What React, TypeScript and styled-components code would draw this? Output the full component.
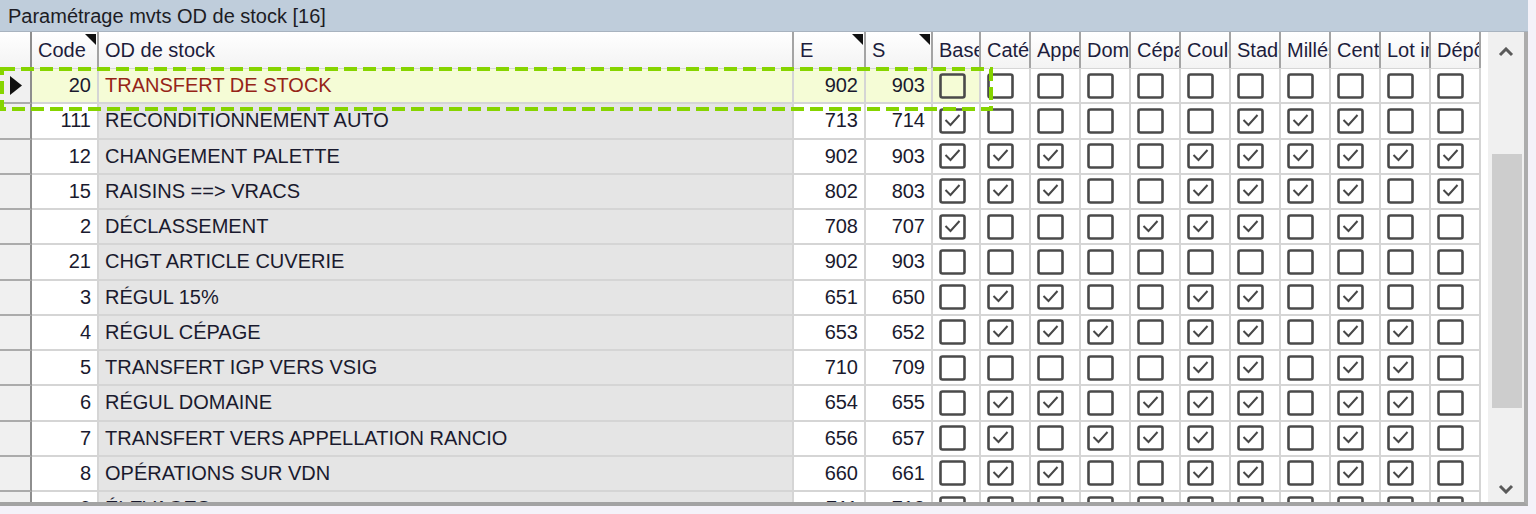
import React from 'react';
import styled, { createGlobalStyle, css } from 'styled-components';

const COLS = '32px 67px 695px 72px 67px 48px repeat(10, 50px)';

const GlobalStyle = createGlobalStyle`
  html, body {
    margin: 0;
    padding: 0;
    background: #f4f2f9;
    font-family: "Liberation Sans", Arial, sans-serif;
  }
`;

const Panel = styled.div`
  position: relative;
  width: 1528px;
`;

const TitleBar = styled.div`
  height: 30px;
  padding: 1px 0 0 8px;
  display: flex;
  align-items: center;
  background: #bfcddb;
  border-bottom: 1px solid #a8b3bf;
  font-size: 20px;
  color: #1c1c24;
`;

const GridFrame = styled.div`
  display: flex;
  height: 470px;
  background: #fff;
  border-bottom: 4px solid #a3a3a3;
  border-right: 4px solid #acacac;
`;

const GridArea = styled.div`
  flex: 1;
  display: flex;
  flex-direction: column;
  overflow: hidden;
`;

const HeaderRow = styled.div`
  display: grid;
  grid-template-columns: ${COLS};
  height: 37px;
  flex-shrink: 0;
  background: linear-gradient(#ffffff, #f3f3f3);
  border-bottom: 1px solid #d6d6d6;
  box-sizing: border-box;
`;

const HeaderCell = styled.div<{ $sort?: boolean }>`
  position: relative;
  display: flex;
  align-items: center;
  padding-left: 6px;
  overflow: hidden;
  white-space: nowrap;
  font-size: 20px;
  color: #1d1d3c;
  border-right: 2px solid #a4a4a4;
  ${({ $sort }) =>
    $sort &&
    css`
      &::after {
        content: '';
        position: absolute;
        top: 2px;
        right: 1px;
        border-top: 11px solid #111;
        border-left: 11px solid transparent;
      }
    `}
`;

const CornerCell = styled.div`
  border-right: 2px solid #8e8e8e;
`;

const Body = styled.div`
  flex: 1;
  overflow: hidden;
`;

const Row = styled.div`
  display: grid;
  grid-template-columns: ${COLS};
  height: 35.25px;
`;

const Cell = styled.div<{ $selected?: boolean }>`
  box-sizing: border-box;
  display: flex;
  align-items: center;
  font-size: 20px;
  white-space: nowrap;
  overflow: hidden;
  color: #1a1a2e;
  border-right: 2px solid #d5d5d5;
  border-bottom: 2px solid #d5d5d5;
  background: ${({ $selected }) => ($selected ? '#f5fcd6' : '#ffffff')};
`;

const IndicatorCell = styled(Cell)`
  justify-content: center;
  background: #f0f0f0;
  border-right-color: #8e8e8e;
  border-bottom-color: #ababab;
`;

const NumCell = styled(Cell)`
  justify-content: flex-end;
  padding-right: 6px;
`;

const LabelCell = styled(Cell)`
  padding-left: 6px;
  background: ${({ $selected }) => ($selected ? '#f5fcd6' : '#e5e5e5')};
  color: ${({ $selected }) => ($selected ? '#962418' : '#1a1a2e')};
`;

const CheckCell = styled(Cell)`
  padding-left: 6px;
`;

const Scrollbar = styled.div`
  width: 36px;
  margin-left: 7px;
  display: flex;
  flex-direction: column;
  align-items: center;
  background: #f0f0f0;
`;

const ScrollButton = styled.div<{ $down?: boolean }>`
  height: 36px;
  display: flex;
  align-items: ${({ $down }) => ($down ? 'flex-end' : 'center')};
  padding-bottom: ${({ $down }) => ($down ? '8px' : '0')};
  padding-top: ${({ $down }) => ($down ? '0' : '4px')};
  box-sizing: border-box;
  justify-content: center;
`;

const Track = styled.div`
  flex: 1;
  width: 100%;
  padding: 86px 2px 0 4px;
  box-sizing: border-box;
`;

const Thumb = styled.div`
  height: 254px;
  background: #cdcdcd;
`;

const Annotation = styled.svg`
  position: absolute;
  left: 0;
  top: 65px;
  pointer-events: none;
`;

type RowData = {
  code: string;
  label: string;
  e: string;
  s: string;
  checks: string;
};

const headers = [
  'Base',
  'Catégorie',
  'Appellation',
  'Domaine',
  'Cépage',
  'Couleur',
  'Stade',
  'Millésime',
  'Centre',
  'Lot interne',
  'Dépôt',
];

const rows: RowData[] = [
  { code: '20', label: 'TRANSFERT DE STOCK', e: '902', s: '903', checks: '00000000000' },
  { code: '111', label: 'RECONDITIONNEMENT AUTO', e: '713', s: '714', checks: '10000011100' },
  { code: '12', label: 'CHANGEMENT PALETTE', e: '902', s: '903', checks: '11100111111' },
  { code: '15', label: 'RAISINS ==> VRACS', e: '802', s: '803', checks: '11100111101' },
  { code: '2', label: 'DÉCLASSEMENT', e: '708', s: '707', checks: '10001110100' },
  { code: '21', label: 'CHGT ARTICLE CUVERIE', e: '902', s: '903', checks: '00000000000' },
  { code: '3', label: 'RÉGUL 15%', e: '651', s: '650', checks: '01100110100' },
  { code: '4', label: 'RÉGUL CÉPAGE', e: '653', s: '652', checks: '01110110110' },
  { code: '5', label: 'TRANSFERT IGP VERS VSIG', e: '710', s: '709', checks: '00000110110' },
  { code: '6', label: 'RÉGUL DOMAINE', e: '654', s: '655', checks: '01101110110' },
  { code: '7', label: 'TRANSFERT VERS APPELLATION RANCIO', e: '656', s: '657', checks: '01011110110' },
  { code: '8', label: 'OPÉRATIONS SUR VDN', e: '660', s: '661', checks: '01100110110' },
  { code: '9', label: 'ÉLEVAGES', e: '711', s: '712', checks: '00000000000' },
];

const CheckBox: React.FC<{ checked: boolean }> = ({ checked }) => (
  <svg width="27" height="26" viewBox="0 0 27 26">
    <rect x="1.5" y="1.5" width="24" height="23" rx="2" fill="none" stroke="#4a4a4a" strokeWidth="2.6" />
    {checked && <polyline points="6.5,12 11.5,17 20.5,7" fill="none" stroke="#474747" strokeWidth="2" />}
  </svg>
);

const Chevron: React.FC<{ down?: boolean }> = ({ down }) => (
  <svg width="16" height="10" viewBox="0 0 16 10">
    <polyline
      points={down ? '2,2 8,8 14,2' : '2,8 8,2 14,8'}
      fill="none"
      stroke="#5a5a5a"
      strokeWidth="3"
    />
  </svg>
);

const Pointer = () => (
  <svg width="13" height="19" viewBox="0 0 13 19">
    <polygon points="1,0 13,9.5 1,19" fill="#111" />
  </svg>
);

export default function App() {
  return (
    <>
      <GlobalStyle />
      <Panel>
        <TitleBar>Paramétrage mvts OD de stock [16]</TitleBar>
        <GridFrame>
          <GridArea>
            <HeaderRow>
              <CornerCell />
              <HeaderCell $sort>Code</HeaderCell>
              <HeaderCell>OD de stock</HeaderCell>
              <HeaderCell $sort>E</HeaderCell>
              <HeaderCell $sort>S</HeaderCell>
              {headers.map((h) => (
                <HeaderCell key={h}>{h}</HeaderCell>
              ))}
            </HeaderRow>
            <Body>
              {rows.map((r, i) => {
                const sel = i === 0;
                return (
                  <Row key={r.code}>
                    <IndicatorCell>{sel && <Pointer />}</IndicatorCell>
                    <NumCell $selected={sel}>{r.code}</NumCell>
                    <LabelCell $selected={sel}>{r.label}</LabelCell>
                    <NumCell $selected={sel}>{r.e}</NumCell>
                    <NumCell $selected={sel}>{r.s}</NumCell>
                    {r.checks.split('').map((c, j) => (
                      <CheckCell key={j} $selected={sel && j === 0}>
                        <CheckBox checked={c === '1'} />
                      </CheckCell>
                    ))}
                  </Row>
                );
              })}
            </Body>
          </GridArea>
          <Scrollbar>
            <ScrollButton>
              <Chevron />
            </ScrollButton>
            <Track>
              <Thumb />
            </Track>
            <ScrollButton $down>
              <Chevron down />
            </ScrollButton>
          </Scrollbar>
        </GridFrame>
        <Annotation width="996" height="48">
          <rect
            x="2"
            y="4"
            width="989"
            height="40"
            fill="none"
            stroke="#86d400"
            strokeWidth="4"
            strokeDasharray="13 6"
          />
        </Annotation>
      </Panel>
    </>
  );
}
